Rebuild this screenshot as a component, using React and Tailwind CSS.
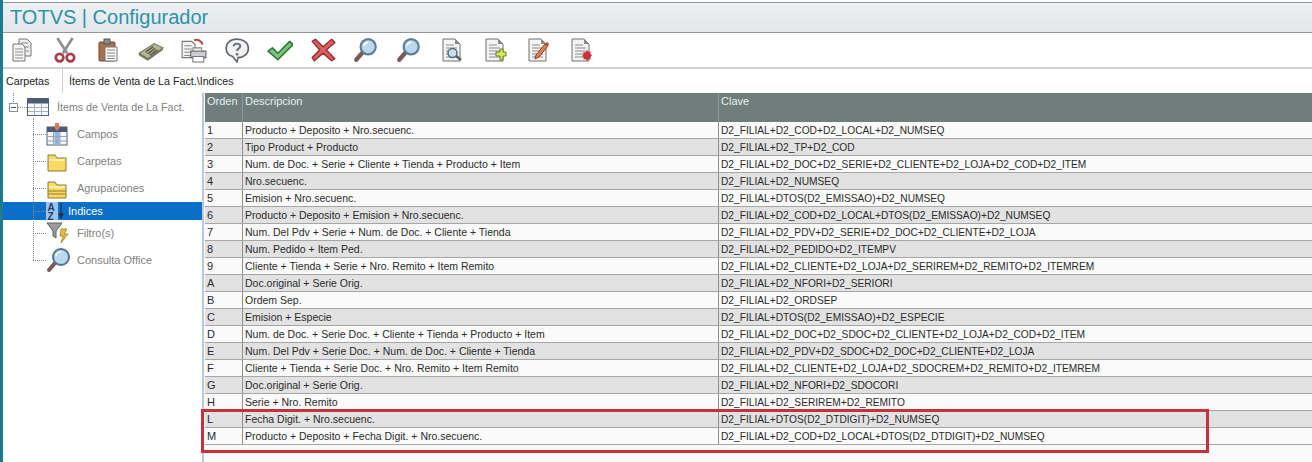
import React from "react";

const rows = [
  ["1", "Producto + Deposito + Nro.secuenc.", "D2_FILIAL+D2_COD+D2_LOCAL+D2_NUMSEQ"],
  ["2", "Tipo Product + Producto", "D2_FILIAL+D2_TP+D2_COD"],
  ["3", "Num. de Doc. + Serie + Cliente + Tienda + Producto + Item", "D2_FILIAL+D2_DOC+D2_SERIE+D2_CLIENTE+D2_LOJA+D2_COD+D2_ITEM"],
  ["4", "Nro.secuenc.", "D2_FILIAL+D2_NUMSEQ"],
  ["5", "Emision + Nro.secuenc.", "D2_FILIAL+DTOS(D2_EMISSAO)+D2_NUMSEQ"],
  ["6", "Producto + Deposito + Emision + Nro.secuenc.", "D2_FILIAL+D2_COD+D2_LOCAL+DTOS(D2_EMISSAO)+D2_NUMSEQ"],
  ["7", "Num. Del Pdv + Serie + Num. de Doc. + Cliente + Tienda", "D2_FILIAL+D2_PDV+D2_SERIE+D2_DOC+D2_CLIENTE+D2_LOJA"],
  ["8", "Num. Pedido + Item Ped.", "D2_FILIAL+D2_PEDIDO+D2_ITEMPV"],
  ["9", "Cliente + Tienda + Serie + Nro. Remito + Item Remito", "D2_FILIAL+D2_CLIENTE+D2_LOJA+D2_SERIREM+D2_REMITO+D2_ITEMREM"],
  ["A", "Doc.original + Serie Orig.", "D2_FILIAL+D2_NFORI+D2_SERIORI"],
  ["B", "Ordem Sep.", "D2_FILIAL+D2_ORDSEP"],
  ["C", "Emision + Especie", "D2_FILIAL+DTOS(D2_EMISSAO)+D2_ESPECIE"],
  ["D", "Num. de Doc. + Serie Doc. + Cliente + Tienda + Producto + Item", "D2_FILIAL+D2_DOC+D2_SDOC+D2_CLIENTE+D2_LOJA+D2_COD+D2_ITEM"],
  ["E", "Num. Del Pdv + Serie Doc. + Num. de Doc. + Cliente + Tienda", "D2_FILIAL+D2_PDV+D2_SDOC+D2_DOC+D2_CLIENTE+D2_LOJA"],
  ["F", "Cliente + Tienda + Serie Doc. + Nro. Remito + Item Remito", "D2_FILIAL+D2_CLIENTE+D2_LOJA+D2_SDOCREM+D2_REMITO+D2_ITEMREM"],
  ["G", "Doc.original + Serie Orig.", "D2_FILIAL+D2_NFORI+D2_SDOCORI"],
  ["H", "Serie + Nro. Remito", "D2_FILIAL+D2_SERIREM+D2_REMITO"],
  ["L", "Fecha Digit. + Nro.secuenc.", "D2_FILIAL+DTOS(D2_DTDIGIT)+D2_NUMSEQ"],
  ["M", "Producto + Deposito + Fecha Digit. + Nro.secuenc.", "D2_FILIAL+D2_COD+D2_LOCAL+DTOS(D2_DTDIGIT)+D2_NUMSEQ"],
];

const Svg = ({ size = 24, children }) => (
  <svg width={size} height={size} viewBox="0 0 24 24" fill="none">
    {children}
  </svg>
);

// sheet of paper with text lines, shared by the document icons
const Sheet = () => (
  <>
    <path d="M3 1h12l5 5v17H3z" fill="#f4f4f2" stroke="#6f6f6f" />
    <path d="M15 1v5h5z" fill="#8a8a8a" />
    <path d="M6 7h8M6 10h11M6 13h11M6 16h11M6 19h11" stroke="#8b8b8b" />
  </>
);

const Lens = ({ x = 14, y = 9, r = 7 }) => (
  <>
    <path d={`M${x - r * 0.7} ${y + r * 0.7}L3 21`} stroke="#7a5a52" strokeWidth="4" strokeLinecap="round" />
    <circle cx={x} cy={y} r={r} fill="#bcd8ee" stroke="#5d7f9c" strokeWidth="2" />
    <path d={`M${x - 4} ${y - 1}a4 4 0 0 1 4-3`} stroke="#fff" strokeWidth="1.5" />
  </>
);

const toolIcons = [
  <Svg>
    <path d="M9 1h8l4 4v13H9z" fill="#eee" stroke="#777" />
    <path d="M3 6h9l3 3v14H3z" fill="#f7f7f5" stroke="#777" />
    <path d="M5 11h8M5 14h8M5 17h8M5 20h8M11 5h7M14 9h5M16 13h3" stroke="#8a8a8a" />
  </Svg>,
  <Svg size={26}>
    <path d="M5 1l9 14M19 1l-9 14" stroke="#8d9196" strokeWidth="2.5" />
    <circle cx="7" cy="19" r="3.5" stroke="#a5404c" strokeWidth="2.5" />
    <circle cx="17" cy="19" r="3.5" stroke="#a5404c" strokeWidth="2.5" />
  </Svg>,
  <Svg>
    <rect x="3" y="4" width="16" height="19" rx="1" fill="#a9714a" stroke="#74492e" />
    <rect x="8" y="1" width="6" height="5" fill="#8d8d8d" stroke="#555" />
    <path d="M9 9h12v14H9z" fill="#f7f7f5" stroke="#777" />
    <path d="M11 12h8M11 15h8M11 18h8M11 20.500h8" stroke="#8a8a8a" />
  </Svg>,
  <Svg size={26}>
    <path d="M1 15L15 6l8 4-14 10z" fill="#b7b59a" stroke="#77755f" />
    <path d="M1 15v2l8 5 14-10v-2L9 20z" fill="#77755f" />
    <path d="M7 14l7-5M9 15.500l7-5M11 17l7-5" stroke="#59614a" strokeWidth="1.500" />
  </Svg>,
  <Svg size={26}>
    <path d="M1 4h9l3 3v12H1z" fill="#f3f3f3" stroke="#777" />
    <path d="M3 8h7M3 11h7M3 14h7M3 17h7" stroke="#8a8a8a" />
    <path d="M9 13h14v6H9z" fill="#c9cdd2" stroke="#666" />
    <path d="M11 18h10v5H11z" fill="#fff" stroke="#777" />
    <path d="M11 10h8v3h-8z" fill="#eee" stroke="#888" />
    <path d="M12 3a6 6 0 0 1 8 4" stroke="#c04a44" strokeWidth="2" />
  </Svg>,
  <Svg size={26}>
    <path d="M12 2c6 0 10.500 3.500 10.500 8.500S18 19 13 19l-1 4-4-5c-3.500-1-6-4-6-7.500C2 5.500 6 2 12 2z" fill="#f2f3f5" stroke="#5f6670" strokeWidth="1.500" />
    <path d="M9 8.500c0-3 6-3 6 0 0 2-3 2-3 4.500" stroke="#6b7680" strokeWidth="2" />
    <circle cx="12" cy="16" r="1.300" fill="#6b7680" />
  </Svg>,
  <Svg size={26}>
    <path d="M1 13l4-3 5 5L21 4l3 3L10 21z" fill="#7cc576" stroke="#2f7a3a" strokeWidth="1.500" strokeLinejoin="round" />
  </Svg>,
  <Svg size={26}>
    <path d="M2 4l3-2 7 7 8-7 3 3-8 7 8 8-3 2-8-7-8 7-2-3 7-7z" fill="#d9605f" stroke="#96272c" strokeWidth="1.200" strokeLinejoin="round" />
  </Svg>,
  <Svg size={26}><Lens /></Svg>,
  <Svg size={26}><Lens /></Svg>,
  <Svg>
    <Sheet />
    <path d="M15 17l6 5" stroke="#5b5f5f" strokeWidth="2.500" />
    <circle cx="12.500" cy="15" r="4.500" fill="#c9dff0" stroke="#566b7c" strokeWidth="1.500" />
  </Svg>,
  <Svg>
    <Sheet />
    <path d="M14 13h4v-3h3v3h3v4h-3v4h-3v-4h-4z" transform="translate(-1 1)" fill="#dce95b" stroke="#6c7e23" />
  </Svg>,
  <Svg>
    <Sheet />
    <path d="M9 21l1-4 9-11 3 2-9 11z" fill="#d9824c" stroke="#8a3f23" />
    <path d="M19 6l3 2 1-2-2-2z" fill="#c23b3b" />
  </Svg>,
  <Svg>
    <Sheet />
    <path d="M18 12l1.500 2 2-.500v2.500l1.500 1.500-1.500 1.500v2.500l-2-.500-1.500 2-1.500-2-2 .500v-2.500L13 18l1.500-1.500V14l2 .500z" fill="#cf2d3a" />
  </Svg>,
];

const TableIcon = ({ marked }) => (
  <svg width="22" height="24" viewBox="0 0 22 24" fill="none">
    <rect x="1" y="4" width="20" height="18" fill="#f4f6f9" stroke="#56617a" />
    <rect x="1" y="4" width="20" height="5" fill="#4d5a78" />
    {marked && <rect x="8.500" y="9" width="5" height="13" fill="#8fb4e6" />}
    <path d="M1 13.500h20M1 18h20M7.500 9v13M14 9v13" stroke="#9aa3b3" />
    {marked && <path d="M9 0h4v3h2l-4 5-4-5h2z" fill="#d9785a" />}
  </svg>
);

const FolderIcon = ({ lines }) => (
  <svg width="22" height="24" viewBox="0 0 22 24" fill="none">
    <path d="M2 5h7l2 3h9v13H2z" fill="#fbd85f" stroke="#8d7a35" />
    <path d="M3 9h16v2H3z" fill="#fdf0b5" />
    {lines && <path d="M2 14h18M2 17h18" stroke="#8d7a35" />}
  </svg>
);

const treeIcons = {
  Campos: <TableIcon marked />,
  Carpetas: <FolderIcon />,
  Agrupaciones: <FolderIcon lines />,
  Indices: (
    <svg width="18" height="18" viewBox="0 0 18 18">
      <rect x="0" y="0" width="12" height="18" fill="#9cc4ee" />
      <text x="1.500" y="8.500" fontSize="10" fontWeight="700" fill="#1f3c68" fontFamily="Liberation Sans">A</text>
      <text x="1.500" y="17.500" fontSize="10" fontWeight="700" fill="#1f3c68" fontFamily="Liberation Sans">Z</text>
      <path d="M15 1v13M13 12l2 4 2-4z" stroke="#1f2f4a" strokeWidth="1.200" fill="#1f2f4a" />
    </svg>
  ),
  "Filtro(s)": (
    <svg width="24" height="24" viewBox="0 0 24 24" fill="none">
      <path d="M1 2h15l-6 8v7l-3-2v-5z" fill="#9a9c9e" stroke="#5c5e60" />
      <path d="M15 8l6 0-3 5h4l-7 9 2-7h-3z" fill="#e7bd3a" stroke="#8e7220" strokeWidth=".700" />
    </svg>
  ),
  "Consulta Office": (
    <svg width="26" height="26" viewBox="0 0 26 26" fill="none">
      <path d="M9 16L3 23" stroke="#7a5a52" strokeWidth="4" strokeLinecap="round" />
      <circle cx="15" cy="10" r="8" fill="#bcd8ee" stroke="#4f7394" strokeWidth="2" />
      <path d="M10 9a5 5 0 0 1 5-4" stroke="#fff" strokeWidth="1.500" />
    </svg>
  ),
};

const treeItems = [
  { label: "Campos", height: "h-[27px]" },
  { label: "Carpetas", height: "h-[27px]" },
  { label: "Agrupaciones", height: "h-[27px]" },
  { label: "Indices", height: "h-[18px]", selected: true },
  { label: "Filtro(s)", height: "h-[26px]" },
  { label: "Consulta Office", height: "h-[28px]" },
];

export default function App() {
  return (
    <div className="flex h-[462px] w-[1312px] flex-col overflow-hidden border-l-[3px] border-[#1d7a90] bg-white text-[11px] font-['Liberation_Sans',Arial,sans-serif] text-[#333]">
      <div className="mt-[2px] flex h-[31px] shrink-0 items-center border-y border-[#8f979c] bg-gradient-to-b from-[#eef0f2] to-[#e3e6ea] pb-[2px] pl-[7px] text-[20px] text-[#2b93a8]">
        TOTVS | Configurador
      </div>

      <div className="flex h-[36px] shrink-0 items-center border-b-2 border-[#d0d0d0]">
        {toolIcons.map((icon, i) => (
          <div key={i} className="flex h-[30px] w-[43px] shrink-0 items-center justify-center first:-ml-[3px]">
            {icon}
          </div>
        ))}
      </div>

      <div className="flex h-[24px] shrink-0 items-center text-[10.7px]">
        <div className="w-[59px] shrink-0 pl-[3px] text-[#222]">Carpetas</div>
        <div className="flex h-full flex-1 items-center border-l border-[#c8d0d8] pl-[6px] text-[#222]">
          Ítems de Venta de La Fact.\Indices
        </div>
      </div>

      <div className="flex min-h-0 flex-1">
        {/* arbol */}
        <div className="w-[201px] shrink-0 border-r-2 border-[#b9c9d9] bg-white pt-[4px] text-[#808080]">
          <div className="relative mb-[4px] flex h-[20px] items-center pl-[6px] text-[10.7px]">
            <div className="absolute left-[10px] top-[-4px] h-[9px] border-l border-dotted border-[#888]" />
            <div className="flex h-[9px] w-[9px] items-center justify-center border border-[#8a9298]">
              <div className="h-px w-[5px] bg-[#555]" />
            </div>
            <div className="w-[9px] border-t border-dotted border-[#888]" />
            <svg width="22" height="20" viewBox="0 0 22 20" fill="none">
              <rect x=".500" y="1.500" width="21" height="17" fill="#f8f9fb" stroke="#59647e" />
              <rect x=".500" y="1.500" width="21" height="5" fill="#4d5a78" />
              <path d="M1 10.500h20M1 14.500h20M7.500 7v11M14.500 7v11" stroke="#a9b0bd" />
            </svg>
            <span className="ml-[8px]">Ítems de Venta de La Fact.</span>
          </div>

          <div className="relative">
            <div className="absolute bottom-[14px] left-[30px] top-[-3px] border-l border-dotted border-[#888]" />
            {treeItems.map((item) => (
              <div key={item.label} className={`flex items-center ${item.height} ${item.selected ? "bg-[#0a6fc9] text-white" : ""}`}>
                <div className="ml-[30px] w-[13px] shrink-0 border-t border-dotted border-[#888]" />
                <div className={`flex shrink-0 ${item.selected ? "w-[18px]" : "w-[26px]"}`}>{treeIcons[item.label]}</div>
                <span className={item.selected ? "ml-[4px]" : "ml-[5px]"}>{item.label}</span>
              </div>
            ))}
          </div>
        </div>

        {/* grilla */}
        <div className="relative min-w-0 flex-1 bg-[#fafafa] pl-px text-[#2b2b2b]">
          <div className="flex h-[29px] bg-[#6f7d7d] text-[#e8eeee]">
            <div className="w-[38px] shrink-0 border-r border-[#8d9999] pl-[2px]">Orden</div>
            <div className="w-[476px] shrink-0 border-r border-[#8d9999] pl-[2px]">Descripcion</div>
            <div className="flex-1 pl-[2px]">Clave</div>
          </div>
          {rows.map((row, i) => (
            <div key={row[0]} className={`flex h-[17px] items-center border-b border-[#a6a6a6] ${i % 2 ? "bg-[#e2e2e2]" : "bg-[#fafafa]"}`}>
              <div className="flex h-full w-[38px] shrink-0 items-center border-r border-[#8f8f8f] pl-[2px] pt-px">{row[0]}</div>
              <div className="flex h-full w-[476px] shrink-0 items-center border-r border-[#8f8f8f] pl-[2px] pt-px text-[10.5px]">{row[1]}</div>
              <div className="flex-1 pl-[2px] pt-px text-[10.2px]">{row[2]}</div>
            </div>
          ))}
          {/* recuadro rojo sobre las dos ultimas filas */}
          <div className="absolute left-[-3px] top-[316px] h-[44px] w-[1008px] border-[3px] border-[#c8303a]" />
        </div>
      </div>
    </div>
  );
}
